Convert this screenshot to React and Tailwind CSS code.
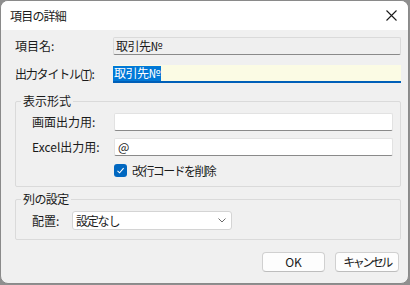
import React from "react";

export default function App() {
  return (
    <div className="w-[410px] h-[285px] bg-[#8f8f8f] text-[12px] leading-none text-[#1a1a1a] font-['Noto_Sans_CJK_JP',sans-serif]">
      <div className="w-[409px] h-[284px] bg-[#f0f0f0] rounded-[8px] border border-[#8a8a8a] overflow-hidden flex flex-col">
        {/* title bar */}
        <div className="h-[29px] bg-white flex items-center justify-between pl-[9px] pr-[10px]">
          <span className="text-[12px] tracking-[-0.8px]">項目の詳細</span>
          <svg width="11" height="11" viewBox="0 0 11 11" className="mr-[1px]">
            <path d="M0.5 0.5 L10.5 10.5 M10.5 0.5 L0.5 10.5" stroke="#1a1a1a" strokeWidth="1.1" />
          </svg>
        </div>
        {/* body */}
        <div className="flex flex-col pl-[14px] pr-[7px]">
          <div className="flex items-center mt-[7px] h-[18px]">
            <span className="w-[98px] text-[12px]">項目名:</span>
            <div className="flex-1 h-[18px] bg-[#efefef] border border-[#dadada] border-b-[#8a8a8a] rounded-[2px] flex items-center pl-[2px] tracking-[-0.5px]">
              取引先№
            </div>
          </div>
          <div className="flex items-center mt-[10px] h-[18px]">
            <span className="w-[98px] text-[12px] tracking-[-1.2px]">
              出力タイトル(<span className="underline">T</span>):
            </span>
            <div className="flex-1 h-[18px] bg-[#fbfbe4] border-b-2 border-[#005fb8] flex items-center">
              <span className="bg-[#0078d7] text-white h-[15px] flex items-center px-[1px] tracking-[-0.5px]">取引先№</span>
            </div>
          </div>

          {/* group 1 */}
          <div className="relative mt-[18px] h-[86px] border border-[#dadada] rounded-[2px] flex flex-col pl-[98px] pr-[7px]">
            <span className="absolute left-[5px] top-[-7px] bg-[#f0f0f0] px-[2px] text-[12px]">表示形式</span>
            <div className="relative flex items-center mt-[11px] h-[18px]">
              <span className="absolute left-[-82px] text-[12px]">画面出力用:</span>
              <div className="flex-1 h-[18px] bg-white border border-[#e2e2e2] border-b-[#8a8a8a] rounded-[2px]" />
            </div>
            <div className="relative flex items-center mt-[7px] h-[18px]">
              <span className="absolute left-[-82px] text-[12px]">Excel出力用:</span>
              <div className="flex-1 h-[18px] bg-white border border-[#e2e2e2] border-b-[#8a8a8a] rounded-[2px] flex items-center pl-[3px]">
                @
              </div>
            </div>
            <div className="flex items-center mt-[8px] h-[13px] gap-[5px]">
              <div className="w-[13px] h-[13px] rounded-[3px] bg-[#0067c0] flex items-center justify-center">
                <svg width="9" height="9" viewBox="0 0 9 9">
                  <path d="M1.5 4.8 L3.6 6.8 L7.6 2.2" stroke="white" strokeWidth="1.1" fill="none" />
                </svg>
              </div>
              <span className="text-[12px] tracking-[-1.6px]">改行コードを削除</span>
            </div>
          </div>

          {/* group 2 */}
          <div className="relative mt-[12px] h-[41px] border border-[#dadada] rounded-[2px] flex items-start pl-[16px]">
            <span className="absolute left-[5px] top-[-7px] bg-[#f0f0f0] px-[2px] text-[12px] tracking-[-0.6px]">列の設定</span>
            <div className="flex items-center mt-[11px] h-[19px]">
              <span className="w-[40px] text-[12px]">配置:</span>
              <div className="w-[160px] h-[19px] bg-white border border-[#d4d4d4] rounded-[3px] flex items-center justify-between pl-[3px] pr-[5px]">
                <span className="tracking-[-1.2px]">設定なし</span>
                <svg width="8" height="5" viewBox="0 0 8 5">
                  <path d="M0.5 0.5 L4 4 L7.5 0.5" stroke="#5a5a5a" strokeWidth="0.9" fill="none" />
                </svg>
              </div>
            </div>
          </div>

          {/* buttons */}
          <div className="flex justify-end mt-[12px] gap-[10px] pr-[2px]">
            <div className="w-[63px] h-[20px] bg-[#fdfdfd] border border-[#d0d0d0] border-b-[#bdbdbd] rounded-[4px] flex items-center justify-center text-[12px]">
              OK
            </div>
            <div className="w-[64px] h-[20px] bg-[#fdfdfd] border border-[#d0d0d0] border-b-[#bdbdbd] rounded-[4px] flex items-center justify-center text-[12px] tracking-[-2.5px]">
              キャンセル
            </div>
          </div>
        </div>
      </div>
    </div>
  );
}
